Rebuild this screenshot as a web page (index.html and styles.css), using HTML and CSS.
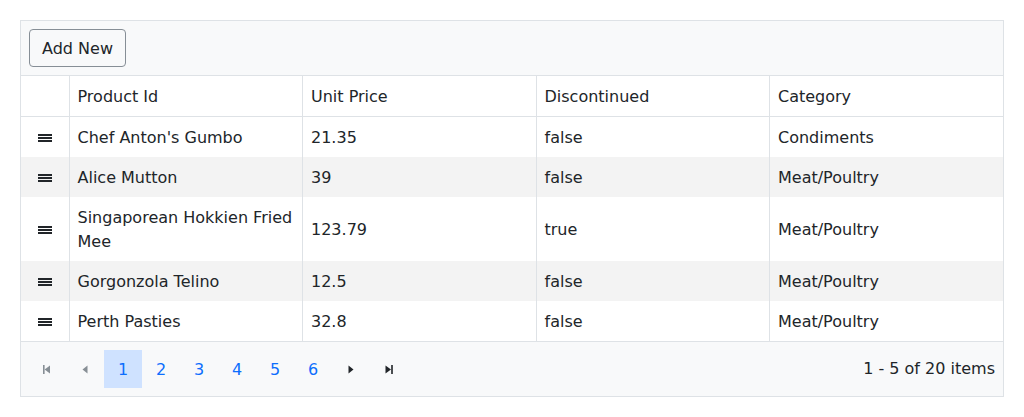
FILE: index.html
```html
<!DOCTYPE html>
<html>
<head>
<meta charset="utf-8">
<link rel="stylesheet" href="styles.css">
</head>
<body>
<div class="grid">
  <div class="toolbar"><button class="btn">Add New</button></div>
  <table class="table">
    <colgroup><col class="c-drag"><col><col><col><col></colgroup>
    <thead>
      <tr><th></th><th>Product Id</th><th>Unit Price</th><th>Discontinued</th><th>Category</th></tr>
    </thead>
    <tbody>
      <tr><td class="drag"><span class="ham"></span></td><td>Chef Anton's Gumbo</td><td>21.35</td><td>false</td><td>Condiments</td></tr>
      <tr class="alt"><td class="drag"><span class="ham"></span></td><td>Alice Mutton</td><td>39</td><td>false</td><td>Meat/Poultry</td></tr>
      <tr><td class="drag"><span class="ham"></span></td><td>Singaporean Hokkien Fried Mee</td><td>123.79</td><td>true</td><td>Meat/Poultry</td></tr>
      <tr class="alt"><td class="drag"><span class="ham"></span></td><td>Gorgonzola Telino</td><td>12.5</td><td>false</td><td>Meat/Poultry</td></tr>
      <tr><td class="drag"><span class="ham"></span></td><td>Perth Pasties</td><td>32.8</td><td>false</td><td>Meat/Poultry</td></tr>
    </tbody>
  </table>
  <div class="pager">
    <div class="pages">
      <span class="pbtn dis"><svg width="8" height="9" viewBox="0 0 8 9"><rect x="0" y="0" width="1.6" height="9"/><path d="M1.6 4.5L7 0.5V8.5Z"/></svg></span>
      <span class="pbtn dis"><svg width="6" height="9" viewBox="0 0 6 9"><path d="M0.5 4.5L5.5 0.5V8.5Z"/></svg></span>
      <span class="pnum sel">1</span>
      <span class="pnum">2</span>
      <span class="pnum">3</span>
      <span class="pnum">4</span>
      <span class="pnum">5</span>
      <span class="pnum">6</span>
      <span class="pbtn"><svg width="6" height="9" viewBox="0 0 6 9"><path d="M0.5 0.5L5.5 4.5L0.5 8.5Z"/></svg></span>
      <span class="pbtn"><svg width="8" height="9" viewBox="0 0 8 9"><path d="M0.5 0.5L6 4.5L0.5 8.5Z"/><rect x="6.2" y="0" width="1.6" height="9"/></svg></span>
    </div>
    <div class="info">1 - 5 of 20 items</div>
  </div>
</div>
</body>
</html>
```
FILE: styles.css
```css
html, body { margin: 0; padding: 0; background: #fff; }
body {
  padding: 20px;
  font-family: "DejaVu Sans", sans-serif;
  font-size: 16px;
  color: #212529;
}
.grid {
  border: 1px solid #dee2e6;
  width: 982px;
}
.toolbar {
  background: #f8f9fa;
  padding: 8px;
  border-bottom: 1px solid #dee2e6;
  display: flex;
}
.btn {
  font-family: "DejaVu Sans", sans-serif;
  font-size: 16px;
  line-height: 24px;
  color: #212529;
  background: transparent;
  border: 1px solid #868e96;
  border-radius: 4px;
  padding: 7px 12px 5px;
  margin: 0;
}
.table {
  width: 100%;
  border-collapse: collapse;
  table-layout: fixed;
  font-size: 16px;
}
.c-drag { width: 48px; }
th, td {
  text-align: left;
  font-weight: normal;
  padding: 9px 8px 7px;
  line-height: 24px;
  border-left: 1px solid #dee2e6;
  vertical-align: middle;
}
th:first-child, td:first-child { border-left: none; }
th {
  border-bottom: 1px solid #dee2e6;
}
tbody tr.alt { background: #f3f3f3; }
td.drag { text-align: center; padding: 0; }
.ham {
  display: inline-block;
  width: 14px;
  height: 8px;
  vertical-align: middle;
  background:
    linear-gradient(#212529, #212529) 0 0 / 14px 2px no-repeat,
    linear-gradient(#212529, #212529) 0 3px / 14px 2px no-repeat,
    linear-gradient(#212529, #212529) 0 6px / 14px 2px no-repeat;
}
.pager {
  background: #f8f9fa;
  border-top: 1px solid #dee2e6;
  padding: 8px 8px 8px 7px;
  display: flex;
  align-items: center;
  justify-content: space-between;
}
.pages { display: flex; }
.pbtn, .pnum {
  width: 38px;
  height: 38px;
  display: flex;
  align-items: center;
  justify-content: center;
}
.pbtn svg { fill: #212529; }
.pbtn.dis svg { fill: #6c757d; opacity: 0.8; }
.pnum { color: #0d6efd; font-size: 16px; }
.pnum.sel { background: #cfe2ff; }
.info { font-size: 16px; line-height: 24px; }
```
